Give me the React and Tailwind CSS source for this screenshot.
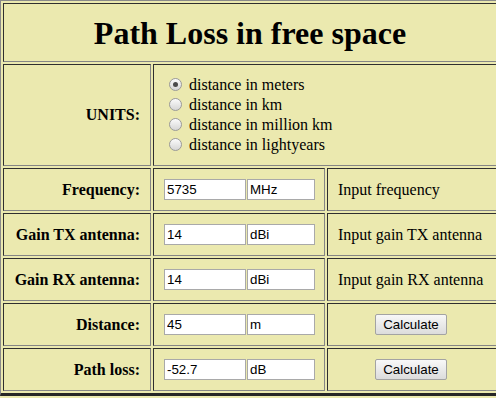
export default function App() {
  const cell =
    "border border-t-[#2f2f2f] border-l-[#2f2f2f] border-r-[#858585] border-b-[#858585]";
  const label = `${cell} flex items-center justify-end pr-[10px] font-bold text-[16px]`;
  const sans = { fontFamily: '"Liberation Sans", Arial, sans-serif' };

  const units = [
    "distance in meters",
    "distance in km",
    "distance in million km",
    "distance in lightyears",
  ];

  const rows = [
    { label: "Frequency:", value: "5735", unit: "MHz", note: "Input frequency" },
    { label: "Gain TX antenna:", value: "14", unit: "dBi", note: "Input gain TX antenna" },
    { label: "Gain RX antenna:", value: "14", unit: "dBi", note: "Input gain RX antenna" },
    { label: "Distance:", value: "45", unit: "m", button: true },
    { label: "Path loss:", value: "-52.7", unit: "dB", button: true },
  ];

  return (
    <div
      className="w-[496px] h-[398px] overflow-hidden bg-[#ebe9af] text-black"
      style={{ fontFamily: '"Liberation Serif", "Times New Roman", serif' }}
    >
      <div className="w-max border-t border-l border-t-[#8a8a8a] border-l-[#8a8a8a] border-b-[3px] border-b-[#262626] p-[2px]">
        <div className="grid grid-cols-[148px_172px_170px] grid-rows-[59px_102px_43px_43px_43px_43px_43px] gap-[2px]">
          {/* title */}
          <div className={`${cell} col-span-3 flex items-center justify-center`}>
            <h1 className="text-[32px] font-bold leading-none">Path Loss in free space</h1>
          </div>

          {/* units */}
          <div className={label}>UNITS:</div>
          <div className={`${cell} col-span-2 flex flex-col justify-center pl-[15px] pb-[1px]`}>
            {units.map((u, i) => (
              <div key={u} className="flex items-center h-[20px] gap-[7px] text-[16px]">
                <span className="w-[13px] h-[13px] rounded-full border border-[#9a9a9a] bg-linear-to-b from-[#fbfbfb] to-[#d6d6d6] flex items-center justify-center">
                  {i === 0 && <span className="w-[5px] h-[5px] rounded-full bg-[#4a4a4a]" />}
                </span>
                <span>{u}</span>
              </div>
            ))}
          </div>

          {rows.map((r) => (
            <Row key={r.label} r={r} cell={cell} label={label} sans={sans} />
          ))}
        </div>
      </div>
    </div>
  );
}

function Row({ r, cell, label, sans }) {
  return (
    <>
      <div className={label}>{r.label}</div>
      <div className={`${cell} flex items-center pl-[10px] gap-[1px]`}>
        <input
          readOnly
          value={r.value}
          className="w-[82px] h-[21px] border border-[#a9a9a9] bg-white px-[2px] text-[13.33px] text-black outline-none"
          style={sans}
        />
        <input
          readOnly
          value={r.unit}
          className="w-[68px] h-[21px] border border-[#a9a9a9] bg-white px-[2px] text-[13.33px] text-black outline-none"
          style={sans}
        />
      </div>
      {r.button ? (
        <div className={`${cell} flex items-center justify-center pr-[2px]`}>
          <button
            className="w-[72px] h-[21px] border border-[#a3a3a3] rounded-[2px] bg-linear-to-b from-[#f8f8f8] to-[#dcdcdc] text-[13.33px] text-black leading-none"
            style={sans}
          >
            Calculate
          </button>
        </div>
      ) : (
        <div className={`${cell} flex items-center pl-[10px] text-[16px]`}>{r.note}</div>
      )}
    </>
  );
}
